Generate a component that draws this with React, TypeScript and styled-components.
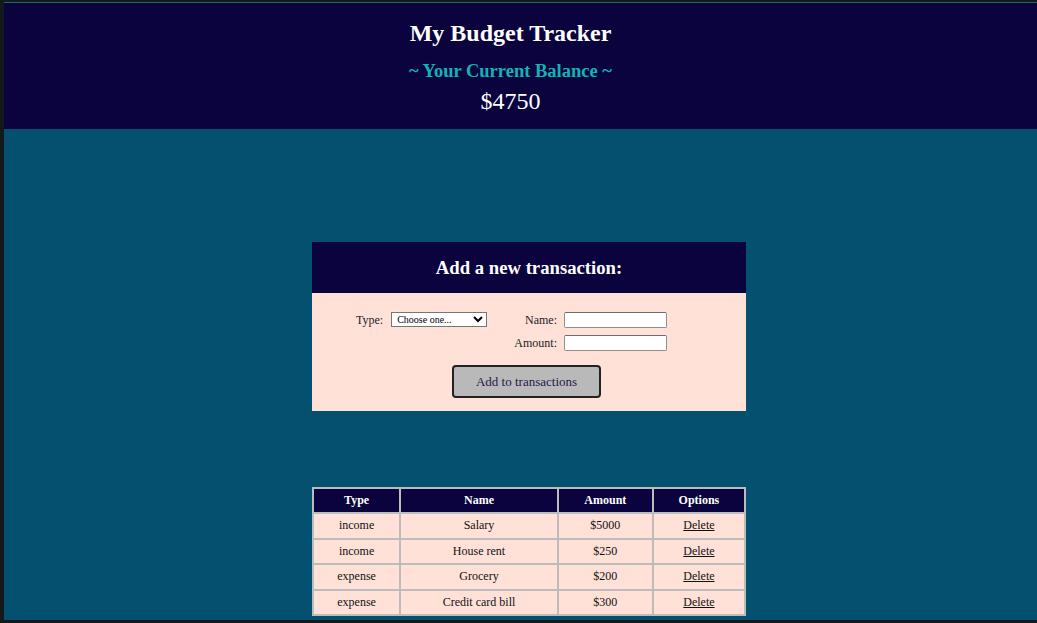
import type { FC } from "react";
import styled, { createGlobalStyle } from "styled-components";

const COLOR = {
  frame: "#14191c",
  navy: "#0a033e",
  teal: "#03506f",
  accent: "#12b3b6",
  pink: "#ffe1d7",
  grey: "#bcbcbc",
  white: "#ffffff",
};

const GlobalStyle = createGlobalStyle`
  html, body {
    margin: 0;
    background: ${COLOR.frame};
    font-family: "Liberation Serif", "Times New Roman", serif;
  }
`;

const Frame = styled.div`
  height: 623px;
  box-sizing: border-box;
  padding: 2px 0 3px 4px;
  display: flex;
  flex-direction: column;
  overflow: hidden;
`;

const Page = styled.main`
  flex: 1;
  display: flex;
  flex-direction: column;
  background: ${COLOR.teal};
  border-top: 1px solid #1b6a6c;
  overflow: hidden;
`;

const Header = styled.header`
  height: 126px;
  box-sizing: border-box;
  padding: 16px 20px 0 0;
  background: ${COLOR.navy};
  display: flex;
  flex-direction: column;
  align-items: center;
  color: ${COLOR.white};
`;

const Title = styled.h1`
  margin: 0;
  font-size: 24px;
  line-height: 28px;
  font-weight: bold;
`;

const Subtitle = styled.h3`
  margin: 13px 0 0;
  font-size: 18.5px;
  line-height: 22px;
  color: ${COLOR.accent};
`;

const Balance = styled.div`
  margin-top: 5px;
  font-size: 24px;
  line-height: 28px;
`;

const Content = styled.section`
  display: flex;
  flex-direction: column;
  gap: 76px;
  padding: 113px 0 0 308px;
`;

const FormCard = styled.form`
  width: 434px;
  background: ${COLOR.pink};
`;

const FormTitle = styled.h3`
  margin: 0;
  height: 51px;
  display: flex;
  align-items: center;
  justify-content: center;
  background: ${COLOR.navy};
  color: ${COLOR.white};
  font-size: 18.7px;
`;

const FormBody = styled.div`
  padding: 19px 0 13px;
  display: flex;
  flex-direction: column;
  align-items: center;
`;

const Fields = styled.div`
  align-self: stretch;
  display: grid;
  grid-template-columns: auto 96px 1fr 103px;
  column-gap: 8px;
  row-gap: 7px;
  padding: 0 79px 0 44px;
  align-items: center;
`;

const Label = styled.label<{ $end?: boolean }>`
  font-size: 12px;
  color: #222;
  justify-self: ${(p) => (p.$end ? "end" : "start")};
  margin-right: ${(p) => (p.$end ? "-1px" : "0")};
`;

const Select = styled.select`
  width: 96px;
  height: 15px;
  box-sizing: border-box;
  font-family: "Liberation Serif", serif;
  font-size: 10px;
  padding: 0 0 0 1px;
  border: 1px solid #767676;
  border-radius: 0;
  background: ${COLOR.white};
  color: #000;
  align-self: start;
`;

const Input = styled.input`
  width: 103px;
  height: 16px;
  box-sizing: border-box;
  border: 1px solid #8f8f8f;
  border-top-color: #6d6d6d;
  border-radius: 2px;
  background: ${COLOR.white};
  padding: 0 2px;
`;

const Button = styled.button`
  margin-top: 14px;
  margin-left: -5px;
  width: 149px;
  height: 33px;
  border: 2px solid #222;
  border-radius: 4px;
  background: #b9b9b9;
  color: #1e1a4a;
  font-family: "Liberation Serif", serif;
  font-size: 13px;
  cursor: pointer;
`;

const Table = styled.table`
  width: 434px;
  border-collapse: collapse;
  border: 2px solid ${COLOR.grey};
  font-size: 12px;
`;

const Th = styled.th<{ $w: number }>`
  width: ${(p) => p.$w}px;
  height: 23px;
  padding: 0;
  background: ${COLOR.navy};
  color: ${COLOR.white};
  border: 2px solid ${COLOR.grey};
  font-weight: bold;
`;

const Td = styled.td`
  height: 23.5px;
  padding: 0;
  background: ${COLOR.pink};
  color: #111;
  border: 2px solid ${COLOR.grey};
  text-align: center;
`;

const DeleteLink = styled.a`
  color: #111;
  text-decoration: underline;
  cursor: pointer;
`;

const transactions = [
  { type: "income", name: "Salary", amount: 5000 },
  { type: "income", name: "House rent", amount: 250 },
  { type: "expense", name: "Grocery", amount: 200 },
  { type: "expense", name: "Credit card bill", amount: 300 },
];

const App: FC = () => {
  return (
    <Frame>
      <GlobalStyle />
      <Page>
        <Header>
          <Title>My Budget Tracker</Title>
          <Subtitle>~ Your Current Balance ~</Subtitle>
          <Balance>$4750</Balance>
        </Header>

        <Content>
          <FormCard onSubmit={(e) => e.preventDefault()}>
            <FormTitle>Add a new transaction:</FormTitle>
            <FormBody>
              <Fields>
                <Label>Type:</Label>
                <Select defaultValue="">
                  <option value="">Choose one...</option>
                  <option value="income">income</option>
                  <option value="expense">expense</option>
                </Select>
                <Label $end>Name:</Label>
                <Input type="text" />
                <span />
                <span />
                <Label $end>Amount:</Label>
                <Input type="number" />
              </Fields>
              <Button type="submit">Add to transactions</Button>
            </FormBody>
          </FormCard>

          <Table>
            <thead>
              <tr>
                <Th $w={87}>Type</Th>
                <Th $w={160}>Name</Th>
                <Th $w={95}>Amount</Th>
                <Th $w={92}>Options</Th>
              </tr>
            </thead>
            <tbody>
              {transactions.map((t) => (
                <tr key={t.name}>
                  <Td>{t.type}</Td>
                  <Td>{t.name}</Td>
                  <Td>${t.amount}</Td>
                  <Td>
                    <DeleteLink>Delete</DeleteLink>
                  </Td>
                </tr>
              ))}
            </tbody>
          </Table>
        </Content>
      </Page>
    </Frame>
  );
};

export default App;
